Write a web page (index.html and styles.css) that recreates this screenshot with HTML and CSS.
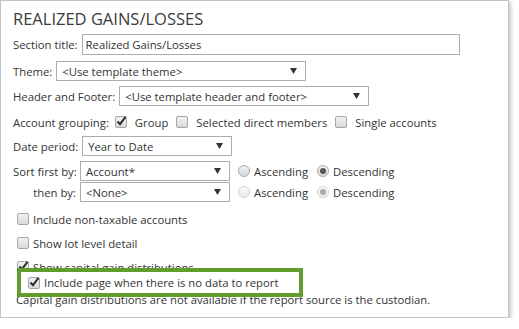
FILE: index.html
```html
<!DOCTYPE html>
<html>
<head>
<meta charset="utf-8">
<title>Realized Gains/Losses</title>
<link rel="stylesheet" href="styles.css">
</head>
<body>
<div class="panel">
  <h1 class="panel-title">REALIZED GAINS/LOSSES</h1>

  <div class="row row-section">
    <span class="label">Section title:</span>
    <span class="field field-section">Realized Gains/Losses</span>
  </div>

  <div class="row row-theme">
    <span class="label">Theme:</span>
    <span class="field select select-wide">
      <span class="select-text">&lt;Use template theme&gt;</span>
      <svg class="arrow" width="7" height="6" viewBox="0 0 7 6"><polygon points="0,0 7,0 3.5,6"/></svg>
    </span>
  </div>

  <div class="row row-header">
    <span class="label">Header and Footer:</span>
    <span class="field select select-wide">
      <span class="select-text">&lt;Use template header and footer&gt;</span>
      <svg class="arrow" width="7" height="6" viewBox="0 0 7 6"><polygon points="0,0 7,0 3.5,6"/></svg>
    </span>
  </div>

  <div class="row row-grouping">
    <span class="label">Account grouping:</span>
    <span class="check checked grouping-first"><svg width="13" height="13" viewBox="0 0 13 13"><path d="M2.5 6.5 L5 9.2 L10.5 1.8"/></svg></span>
    <span class="opt">Group</span>
    <span class="check"></span>
    <span class="opt">Selected direct members</span>
    <span class="check"></span>
    <span class="opt">Single accounts</span>
  </div>

  <div class="row row-date">
    <span class="label">Date period:</span>
    <span class="field select select-narrow">
      <span class="select-text">Year to Date</span>
      <svg class="arrow" width="7" height="6" viewBox="0 0 7 6"><polygon points="0,0 7,0 3.5,6"/></svg>
    </span>
  </div>

  <div class="row row-sort">
    <span class="label label-sort">Sort first by:</span>
    <span class="field select select-narrow">
      <span class="select-text">Account*</span>
      <svg class="arrow" width="7" height="6" viewBox="0 0 7 6"><polygon points="0,0 7,0 3.5,6"/></svg>
    </span>
    <span class="radio"></span>
    <span class="opt">Ascending</span>
    <span class="radio selected"></span>
    <span class="opt">Descending</span>
  </div>

  <div class="row row-then">
    <span class="label label-sort">then by:</span>
    <span class="field select select-narrow">
      <span class="select-text">&lt;None&gt;</span>
      <svg class="arrow" width="7" height="6" viewBox="0 0 7 6"><polygon points="0,0 7,0 3.5,6"/></svg>
    </span>
    <span class="radio disabled"></span>
    <span class="opt">Ascending</span>
    <span class="radio selected disabled"></span>
    <span class="opt">Descending</span>
  </div>

  <div class="row check-row check-row-first">
    <span class="check"></span>
    <span class="opt">Include non-taxable accounts</span>
  </div>
  <div class="row check-row">
    <span class="check"></span>
    <span class="opt">Show lot level detail</span>
  </div>
  <div class="row check-row">
    <span class="check checked"><svg width="13" height="13" viewBox="0 0 13 13"><path d="M2.5 6.5 L5 9.2 L10.5 1.8"/></svg></span>
    <span class="opt">Show capital gain distributions</span>
  </div>

  <!-- highlighted option -->
  <div class="highlight">
    <span class="check checked"><svg width="13" height="13" viewBox="0 0 13 13"><path d="M2.5 6.5 L5 9.2 L10.5 1.8"/></svg></span>
    <span class="opt">Include page when there is no data to report</span>
  </div>

  <p class="note">Capital gain distributions are not available if the report source is the custodian.</p>
</div>
</body>
</html>
```

FILE: styles.css
```css
* {
  box-sizing: border-box;
}

body {
  margin: 0;
  background: #fff;
  font-family: "Open Sans", "Noto Sans", sans-serif;
  font-size: 11.3px;
  color: #333;
}

.panel {
  width: 509px;
  height: 318px;
  border: 1px solid #c4c4c4;
  box-shadow: 2px 2px 4px rgba(0, 0, 0, 0.22);
  padding: 8px 12px 0;
}

.panel-title {
  margin: 0;
  font-size: 16.5px;
  font-weight: normal;
  line-height: 20px;
  color: #3b3b3b;
}

.row {
  display: flex;
  align-items: center;
  height: 20px;
  white-space: nowrap;
}

.label {
  margin-right: 4px;
}

.label-sort {
  width: 63px;
  text-align: right;
}

.row-section { margin-top: 5px; height: 21px; }
.row-theme { margin-top: 6px; }
.row-header { margin-top: 5px; }
.row-grouping { margin-top: 6px; }
.row-date { margin-top: 4px; }
.row-sort { margin-top: 5px; }
.row-then { margin-top: 1px; }

.field {
  display: flex;
  align-items: center;
  height: 100%;
  border: 1px solid #adadad;
  background: #fff;
  padding: 0 5px 0 3px;
}

.field-section {
  width: 378px;
}

.select {
  justify-content: space-between;
  padding: 0 8px 0 5px;
}

.select-wide {
  width: 250px;
}

.select-narrow {
  width: 150px;
}

.arrow {
  fill: #333;
}

/* checkboxes and radios */
.check {
  position: relative;
  flex: none;
  width: 12px;
  height: 12px;
  border: 1px solid #a6a6a6;
  border-radius: 2px;
  background: linear-gradient(#f2f2f2, #d9d9d9);
}

.check svg {
  position: absolute;
  left: -1px;
  top: -2px;
  fill: none;
  stroke: #2e2e2e;
  stroke-width: 2;
}

.radio {
  position: relative;
  flex: none;
  width: 12px;
  height: 12px;
  border: 1px solid #a9a9a9;
  border-radius: 50%;
  background: linear-gradient(#f3f3f3, #d8d8d8);
  margin: 0 4px 0 8px;
}

.radio.selected::after {
  content: "";
  position: absolute;
  left: 2px;
  top: 2px;
  width: 6px;
  height: 6px;
  border-radius: 50%;
  background: #555;
}

.radio.disabled {
  border-color: #d4d4d4;
  background: linear-gradient(#f8f8f8, #ebebeb);
}

.radio.disabled.selected::after {
  background: #ababab;
}

.opt + .radio {
  margin-left: 9px;
}

.row-grouping .check {
  margin: 0 8px;
}

.row-grouping .grouping-first {
  margin-left: 2px;
}

.row-grouping .opt + .check {
  margin-left: 8px;
}

.check-row {
  padding-left: 4px;
  margin-top: 4px;
}

.check-row-first {
  margin-top: 7px;
}

.check-row .check,
.highlight .check {
  margin-right: 4px;
}

.highlight {
  position: relative;
  display: flex;
  align-items: center;
  width: 286px;
  height: 29px;
  margin: -9px 0 0 4px;
  padding-left: 7px;
  border: 4px solid #5f9d2c;
  background: #fff;
  white-space: nowrap;
}

.note {
  margin: -7px 0 0 3px;
  line-height: 20px;
}
```
